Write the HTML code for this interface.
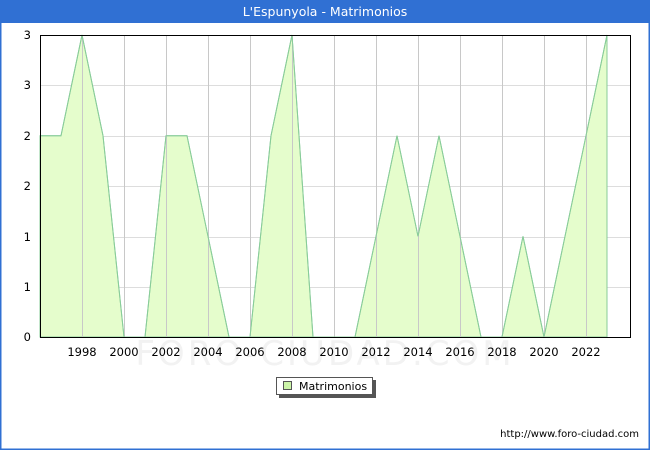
<!DOCTYPE html>
<html><head><meta charset="utf-8"><style>
body{margin:0;width:650px;height:450px;overflow:hidden;background:#fff;font-family:"DejaVu Sans","Liberation Sans",sans-serif}
</style></head><body>
<svg width="650" height="450" xmlns="http://www.w3.org/2000/svg" style="display:block">
<rect x="0" y="0" width="650" height="450" fill="#fff"/>
<rect x="0.5" y="0.5" width="649" height="449" fill="none" stroke="#3070d3" stroke-width="2"/>
<rect x="0" y="0" width="650" height="23" fill="#3070d3"/>
<text x="325" y="16" text-anchor="middle" fill="#fff" font-size="12.5" font-family="DejaVu Sans, sans-serif">L'Espunyola - Matrimonios</text>
<g stroke="#dddddd" stroke-width="1">
<line x1="40" y1="85.5" x2="630" y2="85.5"/><line x1="40" y1="136.5" x2="630" y2="136.5"/>
<line x1="40" y1="186.5" x2="630" y2="186.5"/><line x1="40" y1="237.5" x2="630" y2="237.5"/>
<line x1="40" y1="287.5" x2="630" y2="287.5"/>
</g>
<text x="325" y="365" text-anchor="middle" fill="#f2f2f2" font-size="34" font-family="DejaVu Sans, sans-serif" letter-spacing="3">FORO-CIUDAD.COM</text>
<polygon fill="#e5fdcc" stroke="#88cc99" stroke-width="1" points="40,337 40,135.7 61,135.7 82,35 103,135.7 124,337 145,337 166,135.7 187,135.7 208,236.3 229,337 250,337 271,135.7 292,35 313,337 334,337 355,337 376,236.3 397,135.7 418,236.3 439,135.7 460,236.3 481,337 502,337 523,236.3 544,337 565,236.3 586,135.7 607,35 607,337"/>
<g stroke="#c8c8c8" stroke-width="1">
<line x1="82.5" y1="35" x2="82.5" y2="337"/><line x1="124.5" y1="35" x2="124.5" y2="337"/>
<line x1="166.5" y1="35" x2="166.5" y2="337"/><line x1="208.5" y1="35" x2="208.5" y2="337"/>
<line x1="250.5" y1="35" x2="250.5" y2="337"/><line x1="292.5" y1="35" x2="292.5" y2="337"/>
<line x1="334.5" y1="35" x2="334.5" y2="337"/><line x1="376.5" y1="35" x2="376.5" y2="337"/>
<line x1="418.5" y1="35" x2="418.5" y2="337"/><line x1="460.5" y1="35" x2="460.5" y2="337"/>
<line x1="502.5" y1="35" x2="502.5" y2="337"/><line x1="544.5" y1="35" x2="544.5" y2="337"/>
<line x1="586.5" y1="35" x2="586.5" y2="337"/>
</g>
<polyline fill="none" stroke="#88cc99" stroke-width="1" points="40,135.7 61,135.7 82,35 103,135.7 124,337 145,337 166,135.7 187,135.7 208,236.3 229,337 250,337 271,135.7 292,35 313,337 334,337 355,337 376,236.3 397,135.7 418,236.3 439,135.7 460,236.3 481,337 502,337 523,236.3 544,337 565,236.3 586,135.7 607,35"/>
<rect x="40.5" y="35.5" width="590" height="302" fill="none" stroke="#000" stroke-width="1"/>
<g font-size="11.5" fill="#000" text-anchor="end">
<text x="31" y="39">3</text><text x="31" y="89">3</text><text x="31" y="140">2</text>
<text x="31" y="190">2</text><text x="31" y="241">1</text><text x="31" y="291">1</text><text x="31" y="341">0</text>
</g>
<g font-size="11.5" fill="#000" text-anchor="middle">
<text x="82" y="356">1998</text><text x="124" y="356">2000</text><text x="166" y="356">2002</text>
<text x="208" y="356">2004</text><text x="250" y="356">2006</text><text x="292" y="356">2008</text>
<text x="334" y="356">2010</text><text x="376" y="356">2012</text><text x="418" y="356">2014</text>
<text x="460" y="356">2016</text><text x="502" y="356">2018</text><text x="544" y="356">2020</text>
<text x="586" y="356">2022</text>
</g>
<rect x="279" y="380" width="97" height="18" fill="#555"/>
<rect x="276.5" y="377.5" width="96" height="17" fill="#fff" stroke="#555"/>
<rect x="283.5" y="381.5" width="8" height="8" fill="#ccf5a8" stroke="#555"/>
<text x="299" y="390" font-size="11" fill="#000">Matrimonios</text>
<text x="639" y="437" text-anchor="end" font-size="10" fill="#000" font-family="DejaVu Sans, sans-serif">http://www.foro-ciudad.com</text>
</svg>
</body></html>
